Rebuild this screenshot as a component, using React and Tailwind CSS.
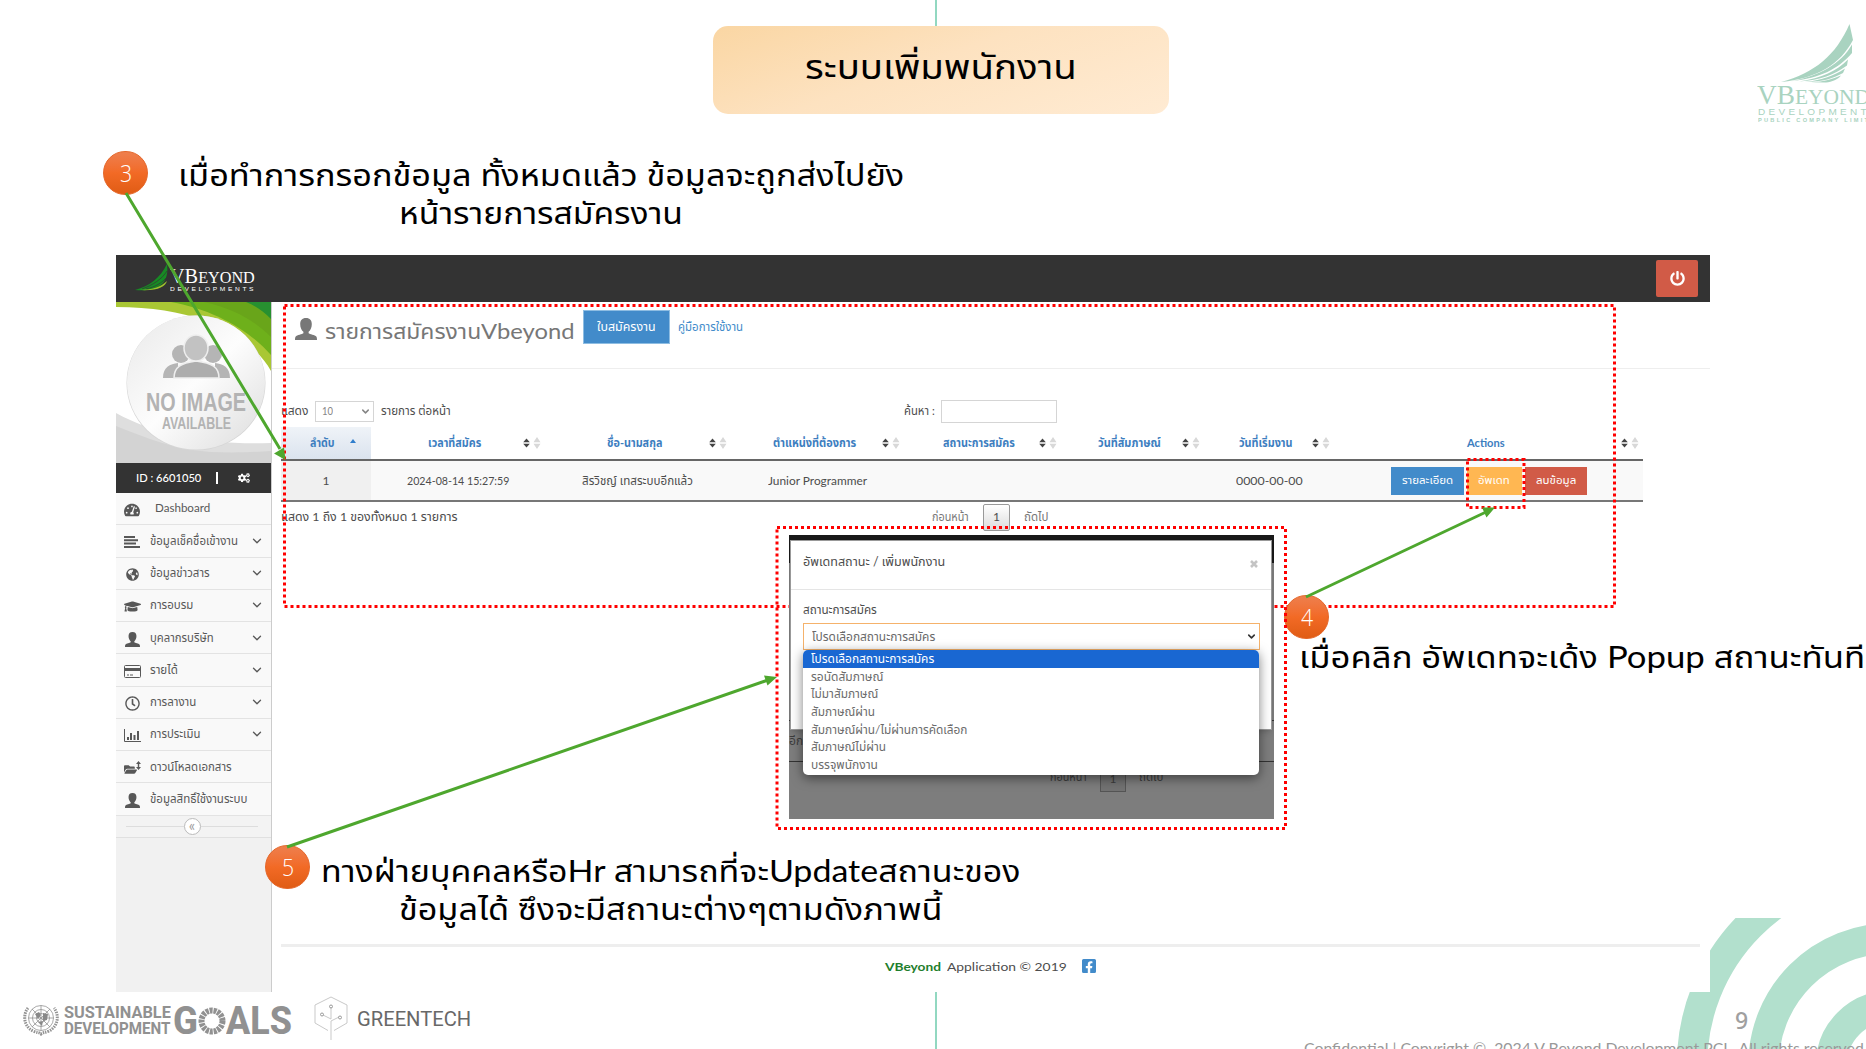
import React, { useLayoutEffect, useRef, useState } from "react";
import { FaTachometerAlt, FaGlobeAmericas, FaGraduationCap, FaRegClock, FaCogs, FaPowerOff, FaFacebookSquare, FaFolderOpen, FaTimes } from "react-icons/fa";
import { ChevronDown } from "lucide-react";

/* Single line of text condensed or widened to an exact width. */
function Fit({ w, className = "", children }) {
  const ref = useRef(null);
  const [k, setK] = useState(1);
  useLayoutEffect(() => {
    setK(w / ref.current.offsetWidth);
  }, [w, children]);
  return (
    <span className={"inline-block shrink-0 text-left whitespace-nowrap " + className} style={{ width: w }}>
      <span ref={ref} className="inline-block origin-left whitespace-nowrap" style={{ transform: `scaleX(${k})` }}>
        {children}
      </span>
    </span>
  );
}

function UserIcon({ className }) {
  return (
    <svg viewBox="0 0 22 22" className={className} fill="currentColor">
      <path d="M11 0C7 0 5.200 2.400 5.200 6c0 3.300 1.200 6.300 3.200 7.800v1.400C7.500 16.200 1.800 17 .7 18.500.1 19.400 0 20.600 0 22h22c0-1.400-.1-2.600-.7-3.500-1.100-1.500-6.800-2.300-7.700-3.300v-1.400c2-1.500 3.200-4.500 3.200-7.800C16.800 2.400 15 0 11 0z" />
    </svg>
  );
}
function LinesIcon() {
  return (
    <svg viewBox="0 0 16 12" className="w-4 h-3" fill="currentColor">
      <path d="M0 0h11v2H0zM0 3.300h14v2H0zM0 6.600h12v2H0zM0 10h16v2H0z" />
    </svg>
  );
}
function CardIcon() {
  return (
    <svg viewBox="0 0 17 13" className="w-[17px] h-[13px]" fill="none" stroke="currentColor">
      <rect x=".5" y=".5" width="16" height="12" rx="1" />
      <path d="M1 4.500h15" strokeWidth="3" />
      <path d="M3 10h2M6 10h3" />
    </svg>
  );
}
function BarsIcon() {
  return (
    <svg viewBox="0 0 17 13" className="w-[17px] h-[13px]" fill="none" stroke="currentColor">
      <path d="M.5 0v12.500H17" />
      <path d="M4 11V8M7 11V4M10.500 11V6M14 11V2" strokeWidth="2" />
    </svg>
  );
}
function FolderIcon() {
  return (
    <span className="flex items-start">
      <FaFolderOpen className="w-[13px] h-[13px] mt-[2px]" />
      <svg viewBox="0 0 5 9" className="w-[5px] h-[9px] -ml-px" fill="currentColor"><path d="M2.500 0L5 3H3.200v3H5L2.500 9 0 6h1.800V3H0z" /></svg>
    </span>
  );
}

const menu = [
  [<FaTachometerAlt className="w-4 h-4" />, "Dashboard", 55, false],
  [<LinesIcon />, "ข้อมูลเช็คชื่อเข้างาน", 88, true],
  [<FaGlobeAmericas className="w-[13px] h-[13px]" />, "ข้อมูลข่าวสาร", 60, true],
  [<FaGraduationCap className="w-[17px] h-[17px]" />, "การอบรม", 43, true],
  [<UserIcon className="w-[15px] h-[15px]" />, "บุคลากรบริษัท", 64, true],
  [<CardIcon />, "รายได้", 28, true],
  [<FaRegClock className="w-[15px] h-[15px]" />, "การลางาน", 46, true],
  [<BarsIcon />, "การประเมิน", 50, true],
  [<FolderIcon />, "ดาวน์โหลดเอกสาร", 82, false],
  [<UserIcon className="w-[15px] h-[15px]" />, "ข้อมูลสิทธิ์ใช้งานระบบ", 97, false],
];

function Avatar() {
  return (
    <svg viewBox="0 0 155 161" className="block w-[155px] h-[161px]">
      <defs>
        <linearGradient id="disc" x1="0" y1="0" x2="1" y2="1">
          <stop offset="0" stopColor="#e9e9e9" /><stop offset=".5" stopColor="#fdfdfd" /><stop offset="1" stopColor="#dcdcdc" />
        </linearGradient>
      </defs>
      <rect width="155" height="161" fill="#fff" />
      <path d="M0 0h155v69C138 38 90 5 0 5z" fill="#a9c734" />
      <path d="M55 0h100v53C135 30 100 8 55 0z" fill="#6eb01b" />
      <path d="M88 0h67v35C140 20 120 7 88 0z" fill="#69a51a" />
      <path d="M130 0h25v17C147 9 140 4 130 0z" fill="#279030" />
      <path d="M0 111c40 22 90 32 155 30v20H0z" fill="#dedede" />
      <path d="M0 124c30 12 60 24 95 26 25 1 45 0 60-1v12H0z" fill="#d3d3d3" />
      <ellipse cx="80" cy="81" rx="69.500" ry="67.500" fill="#d6d6d6" />
      <ellipse cx="80" cy="80.500" rx="69" ry="67" fill="url(#disc)" />
      <g fill="#b5b5b5">
        <circle cx="65" cy="52" r="9" /><circle cx="97" cy="52" r="9" />
        <path d="M47 76c0-11 7-14 15-15v15zM114 76c0-11-7-14-15-15v15z" />
      </g>
      <path d="M58 76c0-11 7-15 22-17 16 2 23 6 23 17z" fill="#adadad" stroke="#eee" strokeWidth="1.500" />
      <ellipse cx="80" cy="46" rx="12" ry="13" fill="#c2c2c2" stroke="#eee" strokeWidth="1.500" />
      <text x="30" y="109" textLength="100" lengthAdjust="spacingAndGlyphs" fontFamily="Liberation Sans, sans-serif" fontWeight="700" fontSize="25" fill="#b3b3b3">NO IMAGE</text>
      <text x="46" y="127" textLength="69" lengthAdjust="spacingAndGlyphs" fontFamily="Liberation Sans, sans-serif" fontWeight="700" fontSize="16" fill="#b3b3b3">AVAILABLE</text>
    </svg>
  );
}

function Sidebar() {
  return (
    <aside className="w-[156px] shrink-0 bg-[#f1f1f1] border-r border-[#ccc] flex flex-col">
      <Avatar />
      <div className="h-[30px] bg-[#333] text-white text-[12px] font-medium flex items-center pl-5">
        <Fit w={65}>ID : 6601050</Fit>
        <span className="ml-[15px] w-[1.500px] h-3 bg-white" />
        <FaCogs className="ml-5 w-3 h-3" />
      </div>
      {menu.map(([icon, label, w, chev]) => (
        <div key={label} className="h-[32.250px] bg-[#f9f9f9] border-b border-[#e3e3e3] flex items-center text-[#585858] text-[12px]">
          <span className="w-8 flex justify-center pt-[3px]">{icon}</span>
          <span className={label === "Dashboard" ? "pl-[7px] -mt-[2px]" : "pl-[2px]"}><Fit w={w}>{label}</Fit></span>
          {chev && <ChevronDown className="ml-auto mr-[7px] w-[14px] h-[14px]" strokeWidth={2.200} />}
        </div>
      ))}
      <div className="h-[22px] bg-[#f3f3f3] border-b border-[#e0e0e0] flex items-center pl-[10px] pr-[13px]">
        <span className="flex-1 h-px bg-[#ddd]" />
        <span className="w-[17px] h-[17px] rounded-full border border-[#bbb] bg-white text-[#999] text-[15px] leading-[12px] text-center">«</span>
        <span className="flex-1 h-px bg-[#ddd]" />
      </div>
    </aside>
  );
}

function Sort() {
  return (
    <svg viewBox="0 0 18 12" className="w-[18px] h-3 shrink-0">
      <path d="M3.500 1.500l3.300 3.800H.2zM3.500 10.500l3.300-3.800H.2z" fill="#444" />
      <path d="M14 0l3.500 5.300h-7zM14 12l3.500-5.300h-7z" fill="#d8d8d8" />
    </svg>
  );
}

const columns = [
  ["เวลาที่สมัคร", 57, 53, 42],
  ["ชื่อ-นามสกุล", 62, 55, 47],
  ["ตำแหน่งที่ต้องการ", 43, 83, 26],
  ["สถานะการสมัคร", 39, 72, 24],
  ["วันที่สัมภาษณ์", 37, 63, 21],
  ["วันที่เริ่มงาน", 35, 54, 19],
  ["Actions", 133, 38, 116],
];
const GRID = "grid grid-cols-[90px_174px_185px_174px_157px_143px_130px_309px] w-[1362px]";

function Main() {
  return (
    <main className="flex-1 bg-white flex flex-col text-[#4d4d4d] text-[12px]">
      <div className="h-[67px] border-b border-[#eee] flex items-start pl-[23px]">
        <UserIcon className="mt-[16px] w-[22px] h-[22px] text-[#777]" />
        <span className="ml-2 mt-[9px] flex text-[22px] leading-[40px] text-[#777]">
          <Fit w={156}>รายการสมัครงาน</Fit>
          <Fit w={94}>Vbeyond</Fit>
        </span>
        <div className="ml-2 mt-2 w-[87px] h-[34px] bg-[#428bca] border border-[#8ebde2] text-white flex items-center justify-center"><Fit w={59}>ใบสมัครงาน</Fit></div>
        <span className="ml-2 mt-4 text-[#428bca]"><Fit w={65}>คู่มือการใช้งาน</Fit></span>
      </div>
      <div className="h-[58px] flex items-center pl-[9px] pt-[26px]">
        <Fit w={27}>แสดง</Fit>
        <div className="ml-[7px] w-[59px] h-[21px] border border-[#d5d5d5] flex items-center justify-between pl-[6px] pr-[2px] text-[#858585]"><Fit w={11}>10</Fit><ChevronDown className="w-[11px] h-[11px]" strokeWidth={3.200} /></div>
        <span className="ml-[7px]"><Fit w={70}>รายการ ต่อหน้า</Fit></span>
        <span className="ml-[453px]"><Fit w={31}>ค้นหา :</Fit></span>
        <div className="ml-[6px] w-[116px] h-[23px] border border-[#d5d5d5]" />
      </div>
      <div className="ml-[9px] w-[1362px]">
        <div className={GRID + " h-[34px] border-b-2 border-[#666] text-[#3d7ebf] font-bold"}>
          <div className="bg-gradient-to-b from-[#eff3f8] to-[#dbe3ee] flex items-center pl-[29px]">
            <Fit w={25}>ลำดับ</Fit>
            <svg viewBox="0 0 6 4" className="ml-[15px] mb-1 w-[6px] h-1"><path d="M3 0l3 4H0z" fill="#307ecc" /></svg>
          </div>
          {columns.map(([t, pl, w, gap]) => (
            <div key={t} className="flex items-center">
              <span style={{ marginLeft: pl, marginRight: gap }}><Fit w={w}>{t}</Fit></span>
              <Sort />
            </div>
          ))}
        </div>
        <div className={GRID + " h-[41px] bg-[#f9f9f9] border-b-2 border-[#777] items-center justify-items-center"}>
          <div className="bg-[#f0f0f0] w-full h-full flex items-center justify-center">1</div>
          <Fit w={102}>2024-08-14 15:27:59</Fit>
          <Fit w={111}>สิรวิชญ์ เทสระบบอีกแล้ว</Fit>
          <Fit w={99}>Junior Programmer</Fit>
          <span />
          <span />
          <Fit w={67}>0000-00-00</Fit>
          <div className="flex gap-[3px] text-white text-[11px]">
            <div className="w-[73px] h-7 bg-[#428bca] flex items-center justify-center"><Fit w={51}>รายละเอียด</Fit></div>
            <div className="w-[55px] h-7 bg-[#ffb752] flex items-center justify-center"><Fit w={32}>อัพเดท</Fit></div>
            <div className="w-[62px] h-7 bg-[#d15b47] flex items-center justify-center"><Fit w={40}>ลบข้อมูล</Fit></div>
          </div>
        </div>
      </div>
      <div className="h-[30px] flex items-center pl-[9px]">
        <Fit w={177}>แสดง 1 ถึง 1 ของทั้งหมด 1 รายการ</Fit>
        <span className="ml-[474px] text-[#777]"><Fit w={37}>ก่อนหน้า</Fit></span>
        <span className="ml-[14px] w-[27px] h-[27px] rounded-[2px] border border-[#999] bg-gradient-to-b from-white to-[#dcdcdc] flex items-center justify-center">1</span>
        <span className="ml-[14px] text-[#777]"><Fit w={24}>ถัดไป</Fit></span>
      </div>
      <div className="mt-auto ml-[9px] mr-[10px] h-[48px] border-t-[3px] border-[#eee] flex justify-center pt-[11px]">
        <span className="font-bold text-[#1e7e2c]"><Fit w={56}>VBeyond</Fit></span>
        <span className="ml-[6px]"><Fit w={120}>Application © 2019</Fit></span>
        <FaFacebookSquare className="ml-[14px] w-4 h-4 text-[#428bca]" />
      </div>
    </main>
  );
}

function AppWindow() {
  return (
    <section className="absolute left-[116px] top-[255px] w-[1594px] h-[737px] flex flex-col">
      <header className="h-[47px] bg-[#333] flex items-center justify-between pl-[18px] pr-3">
        <div className="flex">
          <svg viewBox="0 0 36 28" className="w-[36px] h-7">
            <path d="M1 26C16 22 26 14 33 0c1 8 0 14-4 19-6 6-14 8-28 7z" fill="#178a24" />
            <path d="M8 25C19 21 28 15 33 7M12 25c9-2 16-6 21-12" stroke="#333" strokeWidth=".7" fill="none" />
            <path d="M5 26c13 0 22-3 28-9-2 6-9 10-28 9z" fill="#9dc52c" />
          </svg>
          <div className="flex flex-col text-white pt-[5px] leading-none">
            <span className="text-[16px] leading-[15px] font-['Liberation_Serif',serif]"><Fit w={85}><span className="text-[20px]">VB</span>EYOND</Fit></span>
            <span className="text-[5px] leading-[7px] pt-px font-['Liberation_Sans',sans-serif] tracking-[2px]"><Fit w={86}>DEVELOPMENTS</Fit></span>
          </div>
        </div>
        <div className="w-[42px] h-[37px] rounded-[2px] bg-[#d15b47] flex items-center justify-center"><FaPowerOff className="w-[15px] h-[15px] text-white" /></div>
      </header>
      <div className="flex-1 flex min-h-0"><Sidebar /><Main /></div>
    </section>
  );
}

const options = [
  ["โปรดเลือกสถานะการสมัคร", 123],
  ["รอนัดสัมภาษณ์", 72],
  ["ไม่มาสัมภาษณ์", 67],
  ["สัมภาษณ์ผ่าน", 64],
  ["สัมภาษณ์ผ่าน/ไม่ผ่านการคัดเลือก", 156],
  ["สัมภาษณ์ไม่ผ่าน", 75],
  ["บรรจุพนักงาน", 67],
];

function Popup() {
  return (
    <section className="absolute left-[789px] top-[535px] w-[485px] h-[284px] bg-[#7d7d7d] text-[12px] text-[#3d3d3d] overflow-hidden">
      <div className="h-7 bg-[#191919]" />
      <div className="h-[158px] border-b border-[#333]" />
      <div className="h-[41px] border-b border-[#333] pt-[11px]"><Fit w={14}>อีก</Fit></div>
      <div className="flex pl-[261px]">
        <span className="pt-[6px]"><Fit w={37}>ก่อนหน้า</Fit></span>
        <span className="ml-[13px] mt-1 w-[26px] h-[26px] border border-[#555] bg-[#727272] text-center leading-[24px]">1</span>
        <span className="ml-[13px] pt-[6px]"><Fit w={24}>ถัดไป</Fit></span>
      </div>
      <div className="absolute left-[1px] top-[5px] w-[482px] h-[190px] bg-white border border-[#999] shadow-md text-[#4d4d4d]">
        <div className="h-[49px] border-b border-[#e5e5e5] flex justify-between pl-3 pr-[13px] pt-[11px]">
          <Fit w={142} className="text-[13px]">อัพเดทสถานะ / เพิ่มพนักงาน</Fit>
          <svg viewBox="0 0 8 8" className="mt-[8px] w-2 h-2" stroke="#c4c4c4" strokeWidth="2.600"><path d="M1 1l6 6M7 1L1 7" /></svg>
        </div>
        <div className="pl-3 pt-[11px]"><Fit w={74}>สถานะการสมัคร</Fit></div>
        <div className="ml-[12px] mt-[4px] w-[457px] h-[27px] border border-[#f5b26b] flex items-center justify-between pl-2 pr-[2px] text-[#696969]">
          <Fit w={123}>โปรดเลือกสถานะการสมัคร</Fit>
          <ChevronDown className="w-[11px] h-[11px] text-[#333]" strokeWidth={3.500} />
        </div>
      </div>
      <div className="absolute left-[14px] top-[115px] w-[456px] h-[125px] rounded-[5px] bg-white overflow-hidden shadow-[0_3px_12px_rgba(0,0,0,0.5)] text-[#6c6c6c]">
        {options.map(([t, w], i) => (
          <div key={t} className={"h-[17.700px] leading-[17.700px] pl-2 " + (i === 0 ? "bg-[#1967d2] text-white" : "")}><Fit w={w}>{t}</Fit></div>
        ))}
      </div>
    </section>
  );
}

function Annotations() {
  const dots = { fill: "none", stroke: "#f00", strokeWidth: 3, strokeDasharray: "3 3" };
  return (
    <svg viewBox="0 0 1866 1049" className="absolute inset-0 w-[1866px] h-[1049px]">
      <rect x="777" y="527.500" width="508.500" height="301" {...dots} />
      <rect x="1467.500" y="459.500" width="56.500" height="48" {...dots} />
      <g stroke="#4ea72e" strokeWidth="3" fill="none">
        <path d="M126 193L280 449M1306 597L1485 512.500M287 847L768 680" />
      </g>
      <g fill="#4ea72e">
        <path d="M285.500 460l-11.500-6.500 10-6zM1495 507.500l-8.500 10-4.500-10zM777 677l-9.500 8.500-3.500-10z" />
      </g>
    </svg>
  );
}

function Badge({ className, children }) {
  return (
    <div className={"absolute w-[45px] h-[44px] rounded-full bg-gradient-to-b from-[#ee7f4d] via-[#f26a25] to-[#e05c14] border border-[#e5672a] text-white text-[23px] font-light flex items-center justify-center font-['Open_Sans',sans-serif] " + className}>
      <Fit w={12}>{children}</Fit>
    </div>
  );
}

function BrandLogo() {
  return (
    <div className="absolute left-[1757px] top-[24px] w-[109px] h-[100px] overflow-hidden text-[#a9d3c0] leading-none flex flex-col">
      <svg viewBox="0 0 109 59" className="w-[109px] h-[59px] shrink-0" fill="#a9d3c0">
        <path d="M24 58C58 49 79 31 92.500 0L96 16C83 40 62 54 24 58z" />
        <path d="M34 57.300C62 52 84 40 95 20.500V29C81 45 64 54 34 57.300z" />
        <path d="M42 57.600C65 54 80 47 91 35.500l-1 6C77 51 64 56 42 57.600z" />
        <path d="M48 58C66 56 76 52 88 44.500l-2 4.500C77 54 66 58 48 58z" />
        <path d="M54 58.300C68 57.500 75 55 84 51.500c-3 4-9 6.500-15 7z" />
      </svg>
      <span className="text-[22px] leading-[23px] font-['Liberation_Serif',serif]"><Fit w={113}><span className="text-[28px]">VB</span>EYOND</Fit></span>
      <span className="text-[9px] leading-[9px] font-['Liberation_Sans',sans-serif] tracking-[3px] pl-px"><Fit w={112}>DEVELOPMENT</Fit></span>
      <span className="text-[5px] leading-[7px] font-bold font-['Liberation_Sans',sans-serif] tracking-[2px] pl-px"><Fit w={124}>PUBLIC COMPANY LIMITED</Fit></span>
    </div>
  );
}

function Partners() {
  return (
    <div className="absolute left-[23px] top-[994px] h-[46px] flex items-center text-[#919191] leading-none">
      <svg viewBox="0 0 36 32" className="w-9 h-8 mt-[6px]" fill="none" stroke="#939393">
        <path d="M5 4C0 10 0 22 10 27c4 2 6 1 8 3 2-2 4-1 8-3C36 22 36 10 31 4" strokeWidth="3" strokeDasharray="1.500 1" />
        <g strokeWidth=".8"><circle cx="18" cy="14" r="12.500" /><circle cx="18" cy="14" r="8.500" /><circle cx="18" cy="14" r="4.500" /><path d="M5.500 14h25M18 1.500v25M9 5l18 18M27 5L9 23" /></g>
        <path d="M12 10l4-2 2 3-3 4zM20 9l5 1-1 6-4 1zM15 18l5-1-1 5z" fill="#888" stroke="none" />
      </svg>
      <div className="ml-[5px] mt-[7px] flex flex-col font-bold text-[16px] leading-[15.500px] font-[Roboto,sans-serif]">
        <Fit w={107}>SUSTAINABLE</Fit>
        <Fit w={106}>DEVELOPMENT</Fit>
      </div>
      <div className="ml-[2px] mt-[7px] flex items-center font-extrabold text-[38px] font-[Roboto,sans-serif]">
        <Fit w={25}>G</Fit>
        <svg viewBox="0 0 28 28" className="w-7 h-7"><circle cx="14" cy="14" r="10.500" fill="none" stroke="#919191" strokeWidth="6" strokeDasharray="3 .9" /></svg>
        <Fit w={66}>ALS</Fit>
      </div>
      <svg viewBox="0 0 34 44" className="ml-[22px] w-[34px] h-11 mt-[1px]" fill="none" stroke="#c9c9c9">
        <path d="M14 34.500L1 27V9L17 1l16 8v18l-13 7.500M17 44V25l8-4M17 11v12l-8-4" />
        <circle cx="17" cy="10.500" r="1.500" stroke="#999" /><circle cx="8" cy="18.500" r="1.500" stroke="#999" /><circle cx="26" cy="21.500" r="1.500" stroke="#999" />
      </svg>
      <span className="ml-[9px] mt-[4px] text-[20px] text-[#686868] font-[Roboto,sans-serif]"><Fit w={114}>GREENTECH</Fit></span>
    </div>
  );
}

export default function App() {
  return (
    <div className="relative w-[1866px] h-[1049px] overflow-hidden bg-white font-[Lato,'Noto_Sans_Thai',sans-serif]">
      <div className="absolute left-[935px] top-0 w-[2px] h-[26px] bg-[#92d8c1]" />
      <div className="absolute left-[935px] top-[992px] w-[2px] h-[57px] bg-[#92d8c1]" />
      <svg viewBox="0 0 196 131" className="absolute left-[1670px] top-[918px] w-[196px] h-[131px]" fill="none" stroke="#b2e0cd">
        <circle cx="220" cy="147" r="198" strokeWidth="30.500" />
        <circle cx="220" cy="147" r="126.500" strokeWidth="30.500" />
        <circle cx="220" cy="147" r="58.700" strokeWidth="31" />
      </svg>
      <div className="absolute left-[713px] top-[26px] w-[456px] h-[88px] rounded-[15px] bg-[linear-gradient(160deg,#fad6a3,#fde2c0_45%,#ffebd3)] flex items-center justify-center text-[34px] text-black leading-[40px] pb-[8px]">
        <Fit w={272}>ระบบเพิ่มพนักงาน</Fit>
      </div>
      <BrandLogo />
      <Badge className="left-[103px] top-[151px]">3</Badge>
      <div className="absolute left-[178px] top-[155px] w-[726px] flex flex-col items-center text-[30px] leading-[38px] text-black">
        <Fit w={726}>เมื่อทำการกรอกข้อมูล ทั้งหมดแล้ว ข้อมูลจะถูกส่งไปยัง</Fit>
        <Fit w={284}>หน้ารายการสมัครงาน</Fit>
      </div>
      <AppWindow />
      <svg viewBox="0 0 1866 1049" className="absolute inset-0 w-[1866px] h-[1049px]">
        <rect x="284.500" y="305.500" width="1330" height="301" fill="none" stroke="#f00" strokeWidth="3" strokeDasharray="3 3" />
      </svg>
      <Popup />
      <Badge className="left-[1284px] top-[595px]">4</Badge>
      <Badge className="left-[265px] top-[845px]">5</Badge>
      <Annotations />
      <div className="absolute left-[1299px] top-[637px] text-[30px] leading-[38px] text-black"><Fit w={566}>เมื่อคลิก อัพเดทจะเด้ง Popup สถานะทันที</Fit></div>
      <div className="absolute left-[321px] top-[851px] w-[699px] flex flex-col items-center text-[30px] leading-[38px] text-black">
        <Fit w={699}>ทางฝ่ายบุคคลหรือHr สามารถที่จะUpdateสถานะของ</Fit>
        <Fit w={543}>ข้อมูลได้ ซึงจะมีสถานะต่างๆตามดังภาพนี้</Fit>
      </div>
      <Partners />
      <span className="absolute left-[1735px] top-[1006px] text-[23px] leading-[28px] font-medium text-[#a0a0a0] font-['Noto_Sans',sans-serif]">9</span>
      <span className="absolute left-[1304px] top-[1038px] text-[15px] leading-[20px] text-[#999]"><Fit w={560}>Confidential | Copyright ©&nbsp; 2024 V Beyond Development PCL. All rights reserved</Fit></span>
    </div>
  );
}
